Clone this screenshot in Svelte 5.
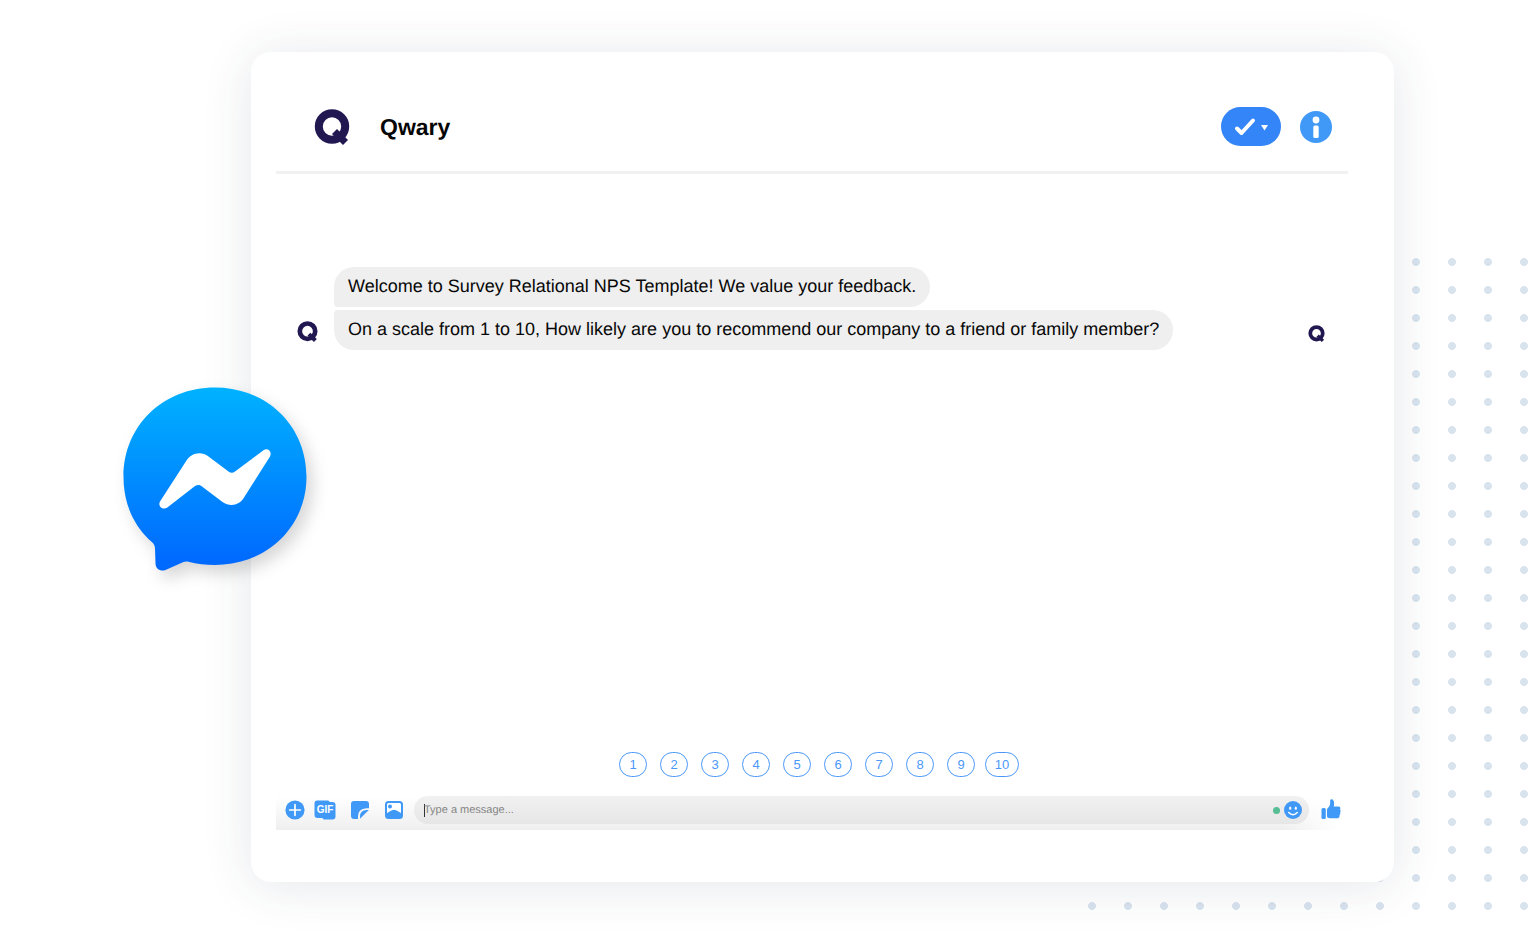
<script>
  const messages = [
    "Welcome to Survey Relational NPS Template! We value your feedback.",
    "On a scale from 1 to 10, How likely are you to recommend our company to a friend or family member?",
  ];
  const scores = [1, 2, 3, 4, 5, 6, 7, 8, 9, 10];

  let draft = $state("");

  function pick(n) {
    draft = String(n);
  }
</script>

{#snippet logo(size)}
  <svg class="logo" width={size} height={size} viewBox="0 0 36 36" aria-hidden="true">
    <circle cx="18" cy="17.5" r="13.2" fill="none" stroke="#211851" stroke-width="8" />
    <path d="M20.5 22.500 31.500 33.500" stroke="#211851" stroke-width="7" />
  </svg>
{/snippet}

<main class="page">
  <div class="dots"></div>

  <section class="card">
    <svg class="messenger" width="184" height="185" viewBox="0 0 184 185" aria-hidden="true">
      <defs>
        <linearGradient id="sky" x1="0" y1="0" x2="0" y2="1">
          <stop offset="0" stop-color="#00b2ff" />
          <stop offset="0.95" stop-color="#006aff" />
        </linearGradient>
      </defs>
      <path
        fill="url(#sky)"
        d="M92 .5C40 .5 .5 38.500.5 90c0 26.500 10.500 49.500 28.300 65 2 1.800 3 3.500 3.200 6l.5 15.500c.2 5.500 5.200 8.500 10 6.500l18-8c1.500-.7 3.200-.8 5-.3 8.500 2.300 17 3.300 26.500 3.300 52 0 91.500-38 91.500-88.500S144 .5 92 .5z"
      />
      <path
        fill="#fff"
        d="M37 114.500 63.500 73.500C68 66 78 63.500 85.500 69.500L105.500 84.500C107.500 86.300 110 86.300 112 84.500L140.500 63.200C144.500 60.500 149.500 64.500 147 69.500L121 110.500C116.500 118.500 107 120 99.500 115L79 99.500C77 97.500 74.500 97.500 72 99L44 120.800C39.500 123.500 34.500 119 37 114.500z"
      />
    </svg>

    <header class="top">
      {@render logo(36)}
      <h1>Qwary</h1>
      <button class="done" aria-label="Mark as done">
        <svg width="34" height="20" viewBox="0 0 34 20">
          <path d="m3 11.500 4.500 4.500L19 3.500" fill="none" stroke="#fff" stroke-width="4" stroke-linecap="round" stroke-linejoin="round" />
          <path d="M27 8h7L30.500 13.500z" fill="#fff" />
        </svg>
      </button>
      <button class="info" aria-label="Conversation information">
        <svg width="32" height="32" viewBox="0 0 32 32">
          <circle cx="16" cy="16" r="16" fill="#4099f7" />
          <circle cx="16" cy="9" r="3.400" fill="#fff" />
          <rect x="13.300" y="14.500" width="5.400" height="12.500" rx="1.500" fill="#fff" />
        </svg>
      </button>
    </header>

    <div class="chat">
      <div class="sender">{@render logo(21)}</div>
      <div class="bubbles">
        {#each messages as m}
          <p>{m}</p>
        {/each}
      </div>
      <div class="seen">{@render logo(17)}</div>
    </div>

    <div class="scores">
      {#each scores as n}
        <button onclick={() => pick(n)}>{n}</button>
      {/each}
    </div>

    <form class="composer" onsubmit={(e) => e.preventDefault()}>
      <div class="tools">
        <button type="button" aria-label="More actions">
          <svg width="20" height="20" viewBox="0 0 20 20">
            <circle cx="10" cy="10" r="9.600" fill="#4099f7" />
            <path d="M10 4.700v10.600M4.700 10h10.600" stroke="#fff" stroke-width="1.700" stroke-linecap="round" />
          </svg>
        </button>
        <button class="gif" type="button" aria-label="Choose a gif">
          <svg width="22" height="20" viewBox="0 0 22 20" aria-hidden="true">
            <path d="M3 .5h10.500c1 0 1.700.5 2.200 1.500H18.500Q21.500 2 21.500 5V16.500Q21.500 19.500 18.500 19.500H11c-1.300 0-2-.5-2.500-1.500H3.500Q.5 18 .5 15V3.500Q.5.5 3 .5z" fill="#4099f7" />
          </svg>
          <span>GIF</span>
        </button>
        <button type="button" aria-label="Choose a sticker">
          <svg width="20" height="20" viewBox="0 0 20 20">
            <path d="M4 1H16Q19 1 19 4V8.200H16.500Q8 8.500 8 16.500V19H4Q1 19 1 16V4Q1 1 4 1z" fill="#4099f7" />
            <path d="M18.800 10 10 18.800V16.500Q10.200 10 16.500 10z" fill="#4099f7" />
          </svg>
        </button>
        <button type="button" aria-label="Attach a photo">
          <svg width="20" height="20" viewBox="0 0 20 20">
            <rect x="2" y="2" width="16" height="16" rx="2.500" fill="#fff" stroke="#4099f7" stroke-width="2" />
            <circle cx="6" cy="6.500" r="2" fill="#4099f7" />
            <path d="M2 13.500Q4 12.800 6 11.300T10 9.800 14 11.300 18 13.500V18H2z" fill="#4099f7" />
          </svg>
        </button>
      </div>
      <div class="field">
        <span class="caret"></span>
        <input type="text" aria-label="Message" placeholder="Type a message..." bind:value={draft} />
        <span class="online"></span>
        <button type="button" aria-label="Choose an emoji">
          <svg width="18" height="18" viewBox="0 0 18 18">
            <circle cx="9" cy="9" r="9" fill="#4099f7" />
            <ellipse cx="6.200" cy="7.200" rx="1.100" ry="1.600" fill="#fff" />
            <ellipse cx="11.800" cy="7.200" rx="1.100" ry="1.600" fill="#fff" />
            <path d="M4.700 11.500Q9 15.800 13.300 11.500" fill="none" stroke="#fff" stroke-width="1.500" stroke-linecap="round" />
          </svg>
        </button>
      </div>
      <button class="like" type="button" aria-label="Send a like">
        <svg width="20" height="22" viewBox="0 0 20 22" fill="#4099f7">
          <rect x=".5" y="9" width="4.300" height="11" rx="1.500" />
          <path d="M6 11C6 9.200 7.200 8.700 8 7.700 9.300 6.100 9.200 4.500 9.100 2 9 .1 10.600-.2 11.600.6c1.700 1.400 1.800 4.400 1.100 7H17.500c1.700 0 2.300 1.700 1.500 2.800.8.800.9 2 .1 2.900.5 1 .3 2-.6 2.700.3 1.700-.5 3.300-2.300 3.300H9c-2 0-3-.7-3-2.500z" />
        </svg>
      </button>
    </form>
  </section>
</main>

<style>
  :global(body) { margin: 0; background: #fff; }
  .page {
    position: relative; box-sizing: border-box; min-height: 100vh; display: flex;
    padding: 52px 134px 59px 251px; overflow: hidden; text-rendering: geometricPrecision;
    font-family: "Liberation Sans", Arial, sans-serif;
  }
  .dots {
    position: absolute; right: 0; bottom: 31px; width: 440px; height: 652px;
    background: radial-gradient(circle at 4px 4px, #d8e3ee 3.600px, transparent 4.300px) 0 0 / 36px 28px;
  }
  .card {
    position: relative; box-sizing: border-box; flex: 1; min-width: 0; display: flex; flex-direction: column;
    padding: 0 46px 52px 25px; background: #fff; border-radius: 20px;
    box-shadow: 0 4px 50px rgba(40, 60, 80, .12);
  }
  .messenger { position: absolute; left: -128px; top: 335px; filter: drop-shadow(6px 8px 8px rgba(0, 0, 0, .16)); }
  .logo { display: block; flex: none; }
  button { padding: 0; border: 0; background: none; font: inherit; cursor: pointer; }
  button svg { display: block; }

  .top {
    display: flex; align-items: center; box-sizing: border-box; height: 122px;
    padding: 30px 16px 0 38px; border-bottom: 3px solid #f1f1f2;
  }
  h1 { flex: 1; margin: 0 0 0 30px; font-size: 23px; line-height: 28px; color: #060606; }
  .done { display: flex; align-items: center; justify-content: center; width: 60px; height: 39px; border-radius: 20px; background: #3485f7; }
  .info { margin-left: 19px; }

  .chat { flex: 1; display: flex; align-items: flex-start; padding: 93px 23px 24px 21px; }
  .sender { padding: 54px 16px 0 0; }
  .seen { margin-left: auto; padding-top: 58px; }
  .bubbles { display: flex; flex-direction: column; align-items: flex-start; gap: 3px; }
  p { margin: 0; padding: 7px 14px 9px; background: #efefef; font-size: 18px; line-height: 24px; color: #080808; }
  p:first-child { border-radius: 20px 20px 20px 4px; }
  p:last-child { border-radius: 4px 20px 20px 20px; }

  .scores { display: grid; grid-template-columns: repeat(10, 41px); justify-content: center; justify-items: center; padding-left: 11px; }
  .scores button { min-width: 28px; height: 25px; padding: 0 9px; border: 1px solid #4b98f9; border-radius: 13px; font-size: 13px; color: #4b98f9; }

  .composer {
    display: flex; align-items: center; box-sizing: border-box; height: 42px; margin-top: 11px; padding: 2px 7px 0 9px;
    background: linear-gradient(to right, transparent 94%, #fff 99%), linear-gradient(#fff 20%, #efefef);
  }
  .tools { display: flex; align-items: center; gap: 14px; margin-right: 10px; }
  .gif { position: relative; margin-left: -5px; }
  .gif span { position: absolute; inset: 0; text-align: center; font-size: 10px; line-height: 20px; font-weight: 700; color: #fff; }
  .field {
    flex: 1; display: flex; align-items: center; box-sizing: border-box; height: 28px; padding: 0 7px 0 10px;
    border-radius: 14px; background: linear-gradient(#f1f1f1, #e6e6e6);
  }
  .caret { width: 1px; height: 13px; margin-right: -1px; background: #333; }
  input { flex: 1; min-width: 0; padding: 0; border: 0; outline: 0; background: none; font: 11px "Liberation Sans", Arial, sans-serif; text-rendering: inherit; color: #222; }
  input::placeholder { color: #858585; opacity: 1; }
  .online { width: 7px; height: 7px; margin-right: 4px; border-radius: 50%; background: #57bd95; }
  .like { margin-left: 12px; }
</style>
